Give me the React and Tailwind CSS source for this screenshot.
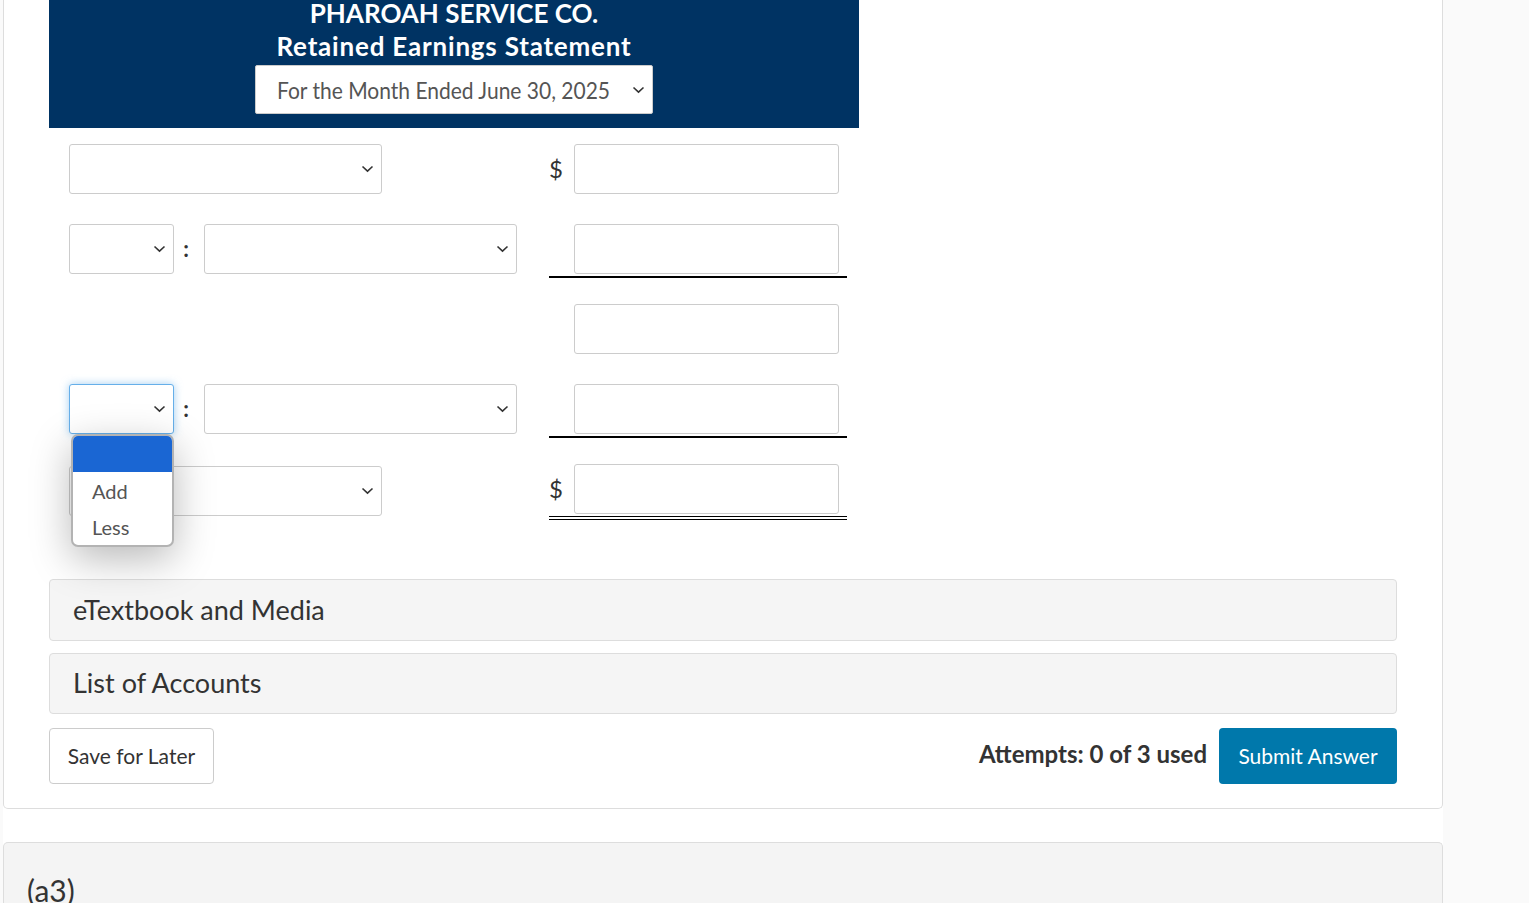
import React from 'react'

const lato = { fontFamily: 'Lato, "Open Sans", sans-serif' }

const Chevron = () => (
  <svg width="13" height="8" viewBox="0 0 13 8">
    <polyline points="1.5,1.5 6.5,6.2 11.5,1.5" fill="none" stroke="#333" strokeWidth="1.6" />
  </svg>
)

const Select = ({ width, focused = false, children }) => (
  <div
    className={`relative flex h-[50px] items-center justify-end rounded-[3px] border bg-white pr-[7px] ${
      focused ? 'border-[#66afe9] shadow-[0_0_8px_rgba(102,175,233,0.6)]' : 'border-[#cccccc]'
    } ${width}`}
  >
    <Chevron />
    {children}
  </div>
)

const Amount = ({ dollar = false, line = null }) => (
  <div className="flex w-[298px] flex-col">
    <div className="flex items-center">
      <span className="w-[25px] text-[24px] leading-none text-[#333]" style={lato}>{dollar ? '$' : ''}</span>
      <div className="h-[50px] w-[265px] rounded-[3px] border border-[#cccccc] bg-white" />
    </div>
    {line === 'single' && <div className="mt-[2px] h-[1.5px] w-full bg-black" />}
    {line === 'double' && <div className="mt-[2px] h-[4px] w-full border-y-[1.5px] border-black" />}
  </div>
)

const Colon = () => (
  <span className="flex w-[30px] justify-center pr-[6px] text-[22px] font-bold leading-none text-[#333]" style={lato}>:</span>
)

const Dropdown = () => (
  <div
    className="absolute left-[1px] top-[49px] z-10 w-[103px] overflow-hidden rounded-[7px] border-2 border-[#b3b3b3] bg-white shadow-[0_12px_40px_rgba(0,0,0,0.28)]"
    style={lato}
  >
    <div className="h-[36px] bg-[#1a66d3]" />
    <div className="flex h-[37px] items-center pl-[19px] text-[20px] text-[#555]">Add</div>
    <div className="flex h-[36px] items-center pl-[19px] text-[20px] text-[#555]">Less</div>
  </div>
)

export default function App() {
  return (
    <div className="min-h-[903px] bg-[#fafafa]" style={lato}>
      <div className="ml-[3px] w-[1440px] bg-white">
        {/* question card */}
        <div className="rounded-b-[5px] border border-t-0 border-[#dddddd] px-[45px] pb-[24px]">
          <div className="flex h-[128px] w-[810px] flex-col items-center bg-[#003363] pb-[14px] text-white">
            <div className="-mt-[3px] whitespace-nowrap text-[26px] font-bold leading-[33px]">
              PHAROAH SERVICE CO.
            </div>
            <div className="whitespace-nowrap text-[26px] font-bold leading-[33px] tracking-[0.8px]">
              Retained Earnings Statement
            </div>
            <div className="mt-[2px] flex h-[49px] w-[398px] items-center justify-between rounded-[2px] border border-[#ccc] bg-white pl-[21px] pr-[7px]">
              <span className="inline-block origin-center scale-y-[1.12] whitespace-nowrap text-[21px] text-[#555]">
                For the Month Ended June 30, 2025
              </span>
              <Chevron />
            </div>
          </div>

          <div className="mt-[16px] grid grid-rows-[80px_80px_80px_80px_80px] pl-[20px]">
            <div className="flex items-start">
              <div className="w-[480px]">
                <Select width="w-[313px]" />
              </div>
              <Amount dollar />
            </div>

            <div className="flex items-start">
              <div className="flex w-[480px] items-center">
                <Select width="w-[105px]" />
                <Colon />
                <Select width="w-[313px]" />
              </div>
              <Amount line="single" />
            </div>

            <div className="flex items-start">
              <div className="w-[480px]" />
              <Amount />
            </div>

            <div className="flex items-start">
              <div className="flex w-[480px] items-center">
                <Select width="w-[105px]" focused>
                  <Dropdown />
                </Select>
                <Colon />
                <Select width="w-[313px]" />
              </div>
              <Amount line="single" />
            </div>

            <div className="flex items-start">
              <div className="w-[480px] pt-[2px]">
                <Select width="w-[313px]" />
              </div>
              <Amount dollar line="double" />
            </div>
          </div>

          <div className="mt-[35px] flex h-[62px] items-center rounded-[4px] border border-[#dddddd] bg-[#f5f5f5] pl-[23px] text-[27px] text-[#333]">
            eTextbook and Media
          </div>
          <div className="mt-[12px] flex h-[61px] items-center rounded-[4px] border border-[#dddddd] bg-[#f5f5f5] pl-[23px] text-[27px] text-[#333]">
            List of Accounts
          </div>

          <div className="mt-[14px] flex items-center justify-between">
            <button className="h-[56px] w-[165px] rounded-[4px] border border-[#cccccc] bg-white text-[21px] text-[#333]">
              Save for Later
            </button>
            <div className="flex items-center gap-[12px]">
              <span className="-mt-[4px] text-[24px] font-bold text-[#333]">Attempts: 0 of 3 used</span>
              <button className="h-[56px] w-[178px] rounded-[4px] bg-[#0078ab] text-[21px] text-white">
                Submit Answer
              </button>
            </div>
          </div>
        </div>

        <div className="h-[33px]" />

        {/* next part */}
        <div className="h-[61px] rounded-t-[5px] border border-b-0 border-[#dddddd] bg-[#f4f4f4] pl-[23px] pt-[32px]">
          <span className="text-[30px] leading-none text-[#333]">(a3)</span>
        </div>
      </div>
    </div>
  )
}
